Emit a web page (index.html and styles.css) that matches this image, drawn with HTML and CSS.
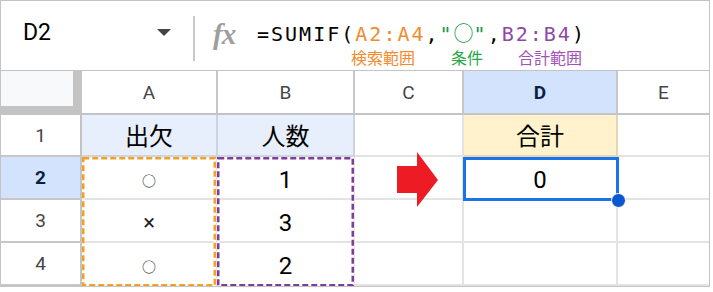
FILE: index.html
```html
<!DOCTYPE html>
<html lang="ja">
  <head>
    <meta charset="utf-8" />
    <title>SUMIF</title>
    <link rel="stylesheet" href="styles.css">
  </head>

  <body>
    <div class="sheet">
      <div class="formula-bar">
        <div class="name-box">
          <span class="cell-ref">D2</span>
          <span class="caret"></span>
        </div>
        <div class="divider"></div>
        <div class="fx">fx</div>
        <div class="formula">
          <div class="formula-text">=SUMIF(<span class="range-a">A2:A4</span>,<span class="cond">"<span class="wide">○</span>"</span>,<span class="range-b">B2:B4</span>)</div>
          <div class="hints">
            <span class="hint hint-range">検索範囲</span>
            <span class="hint hint-cond">条件</span>
            <span class="hint hint-sum">合計範囲</span>
          </div>
        </div>
      </div>

      <div class="grid">
        <div class="corner"><div class="corner-inner"></div></div>
        <div class="col-head">A</div>
        <div class="col-head">B</div>
        <div class="col-head">C</div>
        <div class="col-head selected">D</div>
        <div class="col-head last">E</div>

        <div class="row-head">1</div>
        <div class="cell title">出欠</div>
        <div class="cell title">人数</div>
        <div class="cell"></div>
        <div class="cell total">合計</div>
        <div class="cell last"></div>

        <div class="row-head selected">2</div>
        <div class="cell"><span class="mark">○</span></div>
        <div class="cell">1</div>
        <div class="cell"></div>
        <div class="cell">0</div>
        <div class="cell last"></div>

        <div class="row-head">3</div>
        <div class="cell"><span class="mark cross">×</span></div>
        <div class="cell">3</div>
        <div class="cell"></div>
        <div class="cell"></div>
        <div class="cell last"></div>

        <div class="row-head">4</div>
        <div class="cell"><span class="mark">○</span></div>
        <div class="cell">2</div>
        <div class="cell"></div>
        <div class="cell"></div>
        <div class="cell last"></div>

        <svg class="marks" width="708" height="215" viewBox="0 0 708 215" aria-hidden="true">
          <rect class="ants-base" x="82.25" y="87.25" width="131.5" height="127" />
          <rect class="ants orange" x="82.25" y="87.25" width="131.5" height="127" />
          <rect class="ants-base" x="217.25" y="87.25" width="134.5" height="127" />
          <rect class="ants purple" x="217.25" y="87.25" width="134.5" height="127" />
          <polygon class="arrow" points="396,95 416,95 416,81 437,109 416,136 416,122 396,122" />
        </svg>
        <div class="active-cell"></div>
        <div class="fill-handle"></div>
      </div>
    </div>
  </body>
</html>
```

FILE: styles.css
```css
html {
  font-family: Roboto, "Noto Sans CJK JP", sans-serif;
  color: #000;
}

body {
  margin: 0;
  background: #fff;
}

.sheet {
  width: 710px;
  height: 287px;
  box-sizing: border-box;
  border: 1px solid #c4c4c4;
  overflow: hidden;
}

/* formula bar */

.formula-bar {
  height: 69px;
  border-bottom: 1px solid #c4c4c4;
  display: flex;
  align-items: flex-start;
}

.name-box {
  width: 192px;
  box-sizing: border-box;
  padding: 18px 0 0 22px;
  display: flex;
  align-items: center;
}

.cell-ref {
  font-size: 23px;
  width: 134px;
}

.caret {
  width: 0;
  height: 0;
  border-left: 7px solid transparent;
  border-right: 7px solid transparent;
  border-top: 7px solid #444;
}

.divider {
  width: 2px;
  height: 45px;
  margin-top: 15px;
  background: #c8c8c8;
}

.fx {
  width: 44px;
  margin: 17px 0 0 18px;
  font-family: "Liberation Serif", serif;
  font-style: italic;
  font-weight: bold;
  font-size: 29px;
  color: #9e9e9e;
  letter-spacing: -1px;
}

.formula {
  padding-top: 19px;
}

.formula-text {
  font-family: "DejaVu Sans Mono", monospace;
  font-size: 20px;
  letter-spacing: 2px;
  line-height: 26px;
}

.formula-text .wide {
  font-family: "Noto Sans CJK JP", sans-serif;
  font-size: 20px;
  letter-spacing: 0;
}

.range-a {
  color: #f28b30;
}

.cond {
  color: #1a9447;
}

.range-b {
  color: #8f47a7;
}

.hints {
  display: flex;
  font-family: "Noto Sans CJK JP", sans-serif;
  font-size: 16px;
  line-height: 20px;
}

.hint-range {
  margin-left: 94px;
  color: #f58a2c;
}

.hint-cond {
  margin-left: 36px;
  color: #27a844;
}

.hint-sum {
  margin-left: 35px;
  color: #a352b8;
}

/* grid */

.grid {
  position: relative;
  display: grid;
  grid-template-columns: 81px 136px 137px 109px 154px 1fr;
  grid-template-rows: 44px 42px 43px 43px 43px;
}

.corner {
  background: #c4c4c4;
}

.corner-inner {
  width: 72px;
  height: 35px;
  background: #f8f9fa;
}

.col-head,
.row-head {
  box-sizing: border-box;
  display: flex;
  align-items: center;
  justify-content: center;
  font-size: 19px;
  color: #444746;
  background: #fff;
}

.col-head {
  border-right: 2px solid #c7c7c7;
  border-bottom: 2px solid #c4c4c4;
}

.row-head {
  border-right: 2px solid #c4c4c4;
  border-bottom: 2px solid #c7c7c7;
}

.col-head.last {
  border-right: 0;
}

.col-head.selected,
.row-head.selected {
  background: #d3e3fd;
  color: #0b1f44;
  font-weight: bold;
}

.cell {
  box-sizing: border-box;
  border-right: 2px solid rgba(0, 0, 0, 0.11);
  border-bottom: 2px solid rgba(0, 0, 0, 0.11);
  display: flex;
  align-items: flex-end;
  justify-content: center;
  padding-bottom: 2px;
  font-size: 24px;
  line-height: 32px;
}

.cell.last {
  border-right: 0;
}

.cell.title {
  background: #e7effc;
}

.cell.total {
  background: #fff2cc;
}

.mark {
  font-family: "Noto Sans CJK JP", sans-serif;
  font-size: 14px;
  line-height: 32px;
  color: #222;
}

.mark.cross {
  font-family: Roboto, sans-serif;
  font-size: 22px;
}

/* overlays */

.marks {
  position: absolute;
  left: 0;
  top: 0;
  pointer-events: none;
}

.ants-base,
.ants {
  fill: none;
  stroke-width: 2.5;
}

.ants-base {
  stroke: #fff;
}

.ants {
  stroke-dasharray: 6 3;
}

.ants.orange {
  stroke: #f5a020;
}

.ants.purple {
  stroke: #7e3d98;
}

.arrow {
  fill: #ed1c24;
}

.active-cell {
  position: absolute;
  left: 462px;
  top: 86px;
  width: 156px;
  height: 44px;
  box-sizing: border-box;
  border: 3px solid #1a73e8;
}

.fill-handle {
  position: absolute;
  left: 610px;
  top: 122px;
  width: 15px;
  height: 15px;
  box-sizing: border-box;
  border-radius: 50%;
  background: #0b57d0;
  border: 1px solid #fff;
}
```
